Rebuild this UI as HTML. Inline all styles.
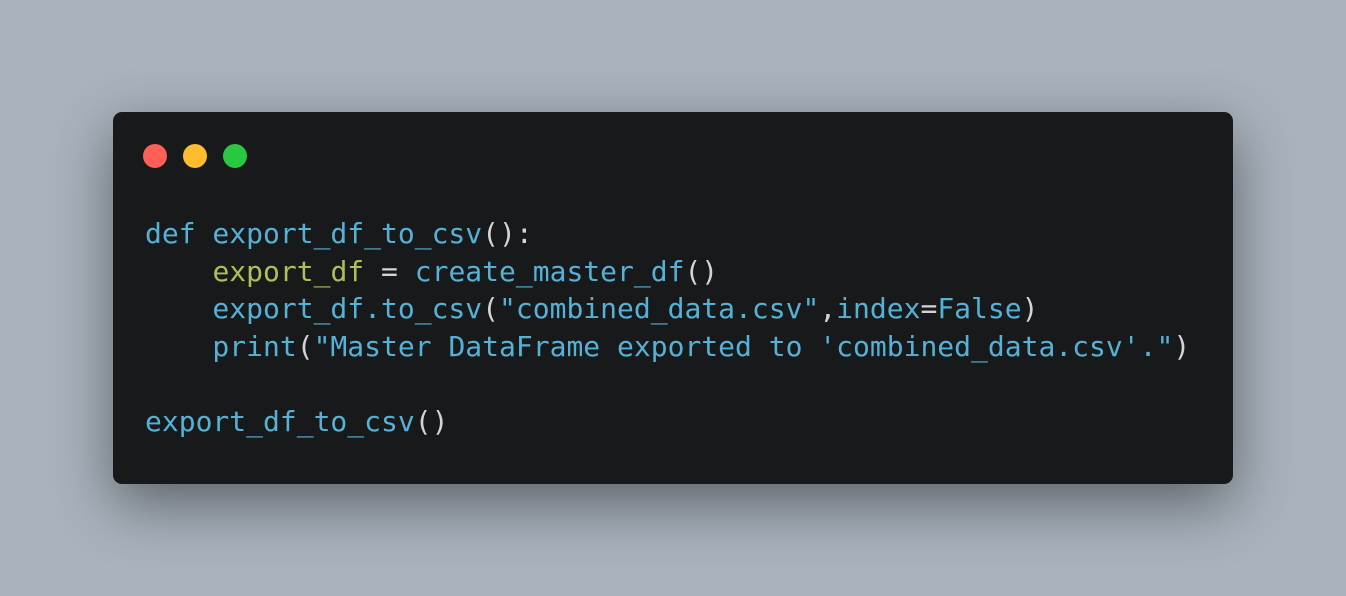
<!DOCTYPE html>
<html><head><style>
html,body{margin:0;padding:0;}
body{width:1346px;height:596px;background:#a9b3bd;position:relative;overflow:hidden;}
.win{position:absolute;left:113px;top:112px;width:1120px;height:372px;background:#18191b;border-radius:9px;box-shadow:0 20px 60px rgba(0,0,0,0.45);}
.dot{position:absolute;top:144px;width:24px;height:24px;border-radius:50%;}
pre{position:absolute;left:145px;top:215px;margin:0;font-family:"DejaVu Sans Mono","Liberation Mono",monospace;font-size:28px;line-height:37.5px;color:#55b2d6;}
.y{color:#a9c15a}.p{color:#d2d4d6}
</style></head><body>
<div class="win"></div>
<div class="dot" style="left:143px;background:#fe5f57"></div>
<div class="dot" style="left:183px;background:#febc2e"></div>
<div class="dot" style="left:223px;background:#29c840"></div>
<pre>def export_df_to_csv<span class="p">():</span>
    <span class="y">export_df</span> <span class="p">=</span> create_master_df<span class="p">()</span>
    export_df.to_csv<span class="p">(</span>"combined_data.csv"<span class="p">,</span>index<span class="p">=</span>False<span class="p">)</span>
    print<span class="p">(</span>"Master DataFrame exported to 'combined_data.csv'."<span class="p">)</span>

export_df_to_csv<span class="p">()</span></pre>
</body></html>
